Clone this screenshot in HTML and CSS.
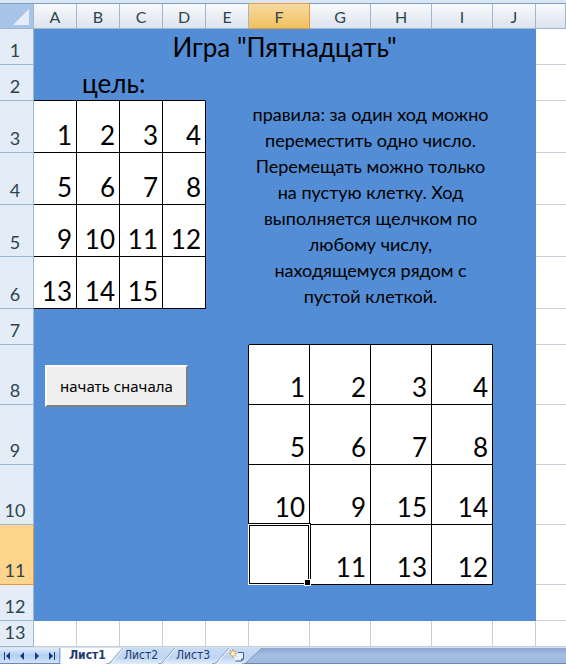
FILE: index.html
```html
<!DOCTYPE html>
<html lang="ru">
<head>
<meta charset="utf-8">
<title>Игра "Пятнадцать"</title>
<link rel="stylesheet" href="styles.css">
</head>
<body>
<main class="workbook">
<table class="sheet">
<colgroup><col class="c-head"><col class="c-s"><col class="c-s"><col class="c-s"><col class="c-s"><col class="c-s"><col class="c-l"><col class="c-l"><col class="c-l"><col class="c-l"><col class="c-s"><col></colgroup>
<thead>
<tr class="letters"><th class="corner"><svg width="16" height="16" viewBox="0 0 16 16"><path d="M16 0V16H0Z" fill="#e6edf8"/></svg></th><th>A</th><th>B</th><th>C</th><th>D</th><th>E</th><th class="on">F</th><th>G</th><th>H</th><th>I</th><th>J</th><th></th></tr>
</thead>
<tbody>
<tr class="r-m"><th>1</th><td class="fill title" colspan="10">Игра "Пятнадцать"</td><td></td></tr>
<tr class="r-m"><th>2</th><td class="fill under"></td><td class="fill goal under" colspan="3">цель:</td><td class="fill" colspan="6"></td><td></td></tr>
<tr class="r-g"><th>3</th><td class="n">1</td><td class="n">2</td><td class="n">3</td><td class="n">4</td><td class="fill" rowspan="4"></td><td class="fill rules" colspan="4" rowspan="4">правила: за один ход можно<br>переместить одно число.<br>Перемещать можно только<br>на пустую клетку. Ход<br>выполняется щелчком по<br>любому числу,<br>находящемуся рядом с<br>пустой клеткой.</td><td class="fill" rowspan="4"></td><td></td></tr>
<tr class="r-g"><th>4</th><td class="n">5</td><td class="n">6</td><td class="n">7</td><td class="n">8</td><td></td></tr>
<tr class="r-g"><th>5</th><td class="n">9</td><td class="n">10</td><td class="n">11</td><td class="n">12</td><td></td></tr>
<tr class="r-g"><th>6</th><td class="n">13</td><td class="n">14</td><td class="n">15</td><td class="n"></td><td></td></tr>
<tr class="r-m"><th>7</th><td class="fill" colspan="4"></td><td class="fill"></td><td class="fill under" colspan="4"></td><td class="fill"></td><td></td></tr>
<tr class="r-b"><th>8</th><td class="fill restart" colspan="4" rowspan="4"><button class="restart-button" type="button">начать сначала</button></td><td class="fill edge" rowspan="4"></td><td class="n">1</td><td class="n">2</td><td class="n">3</td><td class="n">4</td><td class="fill" rowspan="4"></td><td></td></tr>
<tr class="r-b"><th>9</th><td class="n">5</td><td class="n">6</td><td class="n">7</td><td class="n">8</td><td></td></tr>
<tr class="r-b"><th>10</th><td class="n">10</td><td class="n">9</td><td class="n">15</td><td class="n">14</td><td></td></tr>
<tr class="r-b"><th class="on">11</th><td class="n active"><span class="cursor"></span></td><td class="n">11</td><td class="n">13</td><td class="n">12</td><td></td></tr>
<tr class="r-m"><th>12</th><td class="fill" colspan="10"></td><td></td></tr>
<tr class="r-last"><th>13</th><td></td><td></td><td></td><td></td><td></td><td></td><td></td><td></td><td></td><td></td><td></td></tr>
</tbody>
</table>
<nav class="tabs" aria-label="Листы">
<div class="arrows">
<button type="button" aria-label="Первый лист"><svg width="8" height="8" viewBox="0 0 8 8"><path d="M1 0h1v8H1zM7 0v8L3 4z"/></svg></button>
<button type="button" aria-label="Предыдущий лист"><svg width="8" height="8" viewBox="0 0 8 8"><path d="M6 0v8L2 4z"/></svg></button>
<button type="button" aria-label="Следующий лист"><svg width="8" height="8" viewBox="0 0 8 8"><path d="M2 0v8l4-4z"/></svg></button>
<button type="button" aria-label="Последний лист"><svg width="8" height="8" viewBox="0 0 8 8"><path d="M6 0h1v8H6zM1 0v8l4-4z"/></svg></button>
</div>
<div class="sheets">
<svg class="shapes" width="204" height="16" viewBox="0 0 204 16">
<defs><linearGradient id="tab" x1="0" y1="0" x2="0" y2="1"><stop offset="0" stop-color="#c9dcf5"/><stop offset=".6" stop-color="#bed5f3"/><stop offset="1" stop-color="#e2edfb"/></linearGradient></defs>
<path d="M0 0H202L187 14Q185 16 182 16H0Z" fill="url(#tab)"/>
<path d="M1 0H62L50 14Q49 16 46 16H4Q1 16 1 13Z" fill="#fbfdff"/>
<path d="M63 0L51 14Q49 16 46 16M115 0L103 14Q101 16 98 16M169 0L157 14Q155 16 152 16M202 0L187 14Q185 16 182 16" fill="none" stroke="#7b95bd"/>
<path d="M64 0L52 14M116 0L104 14M170 0L158 14" fill="none" stroke="#fff"/>
</svg>
<button class="tab current" type="button">Лист1</button>
<button class="tab" type="button">Лист2</button>
<button class="tab" type="button">Лист3</button>
<button class="tab add" type="button" aria-label="Вставить лист"><svg width="18" height="14" viewBox="0 0 18 14"><path d="M5 4h10v7h-2v1H7V9H5z" fill="#e8f0fb"/><path d="M10 3.500h5.500V10l-2 2H7.500" fill="none" stroke="#435f8d"/><path d="M13.500 12v-2h2" fill="none" stroke="#435f8d"/><path d="M5 0v9M1 4.500h8M2 1.500l6 6M8 1.500l-6 6" stroke="#d88a35"/><circle cx="5" cy="4.500" r="2" fill="#fff2b8"/></svg></button>
</div>
</nav>
</main>
</body>
</html>
```
FILE: styles.css
```css
* {
  box-sizing: border-box;
}

body {
  margin: 0;
  background: #fff;
  color: #000;
  font-family: Lato, "Noto Sans", sans-serif;
}

button {
  margin: 0;
  padding: 0;
  border: 0;
  background: none;
  color: inherit;
  font: inherit;
}

.workbook {
  border-top: 3px solid #d9e6f5;
}

.sheet {
  width: 100%;
  table-layout: fixed;
  border-collapse: separate;
  border-spacing: 0;
}

.c-head { width: 34px; }
.c-s { width: 43px; }
.c-l { width: 61px; }

.letters { height: 26px; }
.r-m { height: 36px; }
.r-g { height: 52px; }
.r-b { height: 60px; }
.r-last { height: 26px; }

th,
td {
  padding: 0;
  border-right: 1px solid #c8cdd8;
  border-bottom: 1px solid #c8cdd8;
}

td:last-child {
  border-right: 0;
}

th {
  padding: 0 3px 3px 0;
  background: #e3ecf7;
  border-color: #9eb6ce;
  color: #2b454c;
  font-size: 18px;
  font-weight: 400;
  line-height: 22px;
  text-align: center;
  vertical-align: bottom;
}

.letters th {
  padding: 0;
  border-top: 1px solid #7e9cc0;
  background: linear-gradient(#f8fafc, #dde3ed);
  font-size: 16px;
}

.letters .corner {
  padding: 5px 4px 0 0;
  background: #a9c4e9;
  line-height: 0;
  text-align: right;
  vertical-align: top;
}

.letters .on {
  border-color: #e29a45;
  background: linear-gradient(#f9d99f, #f1c15f);
}

tbody .on {
  border-color: #e29a45;
  background: #ffd58d;
}

.fill {
  border-color: #538dd5;
  background: #538dd5;
}

.under {
  border-bottom-color: #000;
}

.edge {
  border-right-color: #000;
}

.title,
.goal {
  font-size: 26px;
  line-height: 34px;
}

.title {
  text-align: center;
}

.goal {
  padding-left: 5px;
}

.n {
  padding: 0 4px 0 0;
  border-color: #000;
  background: #fff;
  font-size: 26px;
  line-height: 34px;
  text-align: right;
  vertical-align: bottom;
}

.rules {
  border-bottom: 0;
  font-size: 18px;
  line-height: 26px;
  text-align: center;
  white-space: nowrap;
  vertical-align: top;
}

.restart {
  padding: 20px 0 0 11px;
  vertical-align: top;
}

.restart-button {
  display: block;
  width: 143px;
  height: 42px;
  border: 2px solid;
  border-color: #fff #7d7d7d #7d7d7d #fff;
  background: #efefef;
  font-family: "Noto Sans", sans-serif;
  font-size: 15px;
}

.active {
  position: relative;
}

.cursor {
  position: absolute;
  inset: -1px;
  border: 1px solid #fff;
  box-shadow: inset 0 0 0 1px #000, 1px -1px 0 0 #000;
}

.cursor::after {
  content: "";
  position: absolute;
  right: -2px;
  bottom: -2px;
  width: 5px;
  height: 5px;
  border: 1px solid #fff;
  background: #000;
}

.tabs {
  display: flex;
  height: 17px;
  border-top: 1px solid #d5e2f3;
  border-bottom: 1px solid #6d88b0;
  background: linear-gradient(#8ca8d2, #a6bee2 50%, #9fb8de);
  color: #1f3c70;
  font-family: "DejaVu Sans Condensed", "DejaVu Sans", sans-serif;
  font-size: 12px;
}

.arrows {
  display: flex;
  justify-content: space-around;
  align-items: center;
  width: 60px;
  border-right: 1px solid #8ba7cf;
  background: linear-gradient(#e0ebfa, #b5cef0 50%, #d2e2f8);
}

.arrows button {
  line-height: 0;
}

.arrows svg {
  fill: #143a86;
}

.sheets {
  position: relative;
  display: flex;
}

.shapes {
  position: absolute;
  inset: 0 auto auto 0;
}

.tab {
  position: relative;
  width: 52px;
  line-height: 15px;
  text-align: center;
}

.current {
  width: 55px;
  font-weight: 700;
}

.add {
  width: 36px;
  line-height: 0;
}
```
